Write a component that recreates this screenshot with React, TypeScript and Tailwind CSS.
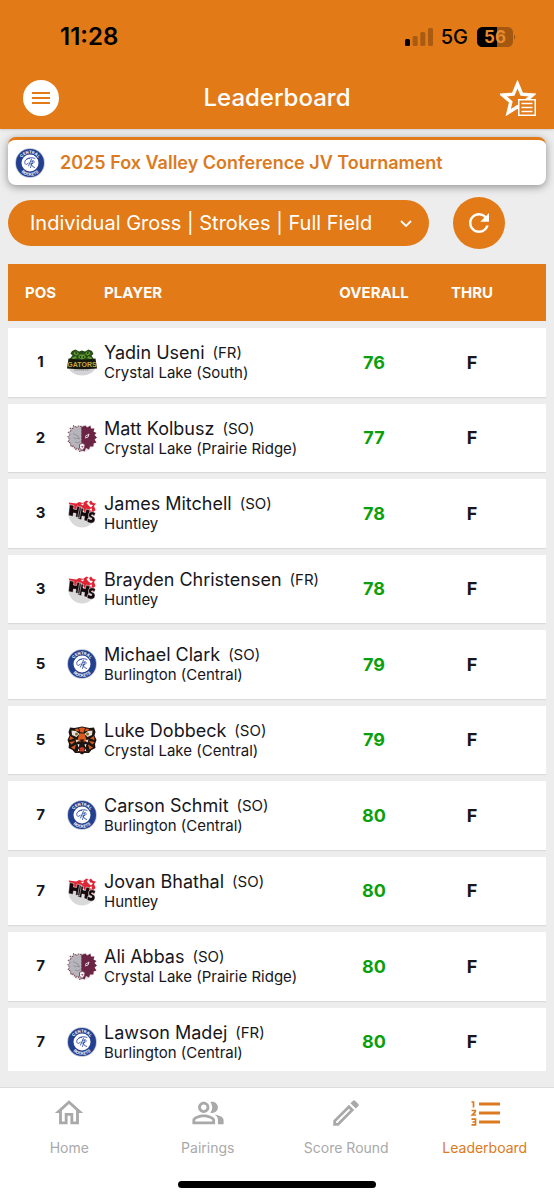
import React, { useId, useState } from 'react';
import { MdOutlineModeEdit, MdOutlinePeopleAlt, MdRefresh } from 'react-icons/md';

type Team = 'gators' | 'wolves' | 'huntley' | 'rockets' | 'tigers';

interface Player {
  pos: number;
  name: string;
  year: string;
  school: string;
  team: Team;
  overall: number;
  thru: string;
}

const players: Player[] = [
  { pos: 1, name: 'Yadin Useni', year: 'FR', school: 'Crystal Lake (South)', team: 'gators', overall: 76, thru: 'F' },
  { pos: 2, name: 'Matt Kolbusz', year: 'SO', school: 'Crystal Lake (Prairie Ridge)', team: 'wolves', overall: 77, thru: 'F' },
  { pos: 3, name: 'James Mitchell', year: 'SO', school: 'Huntley', team: 'huntley', overall: 78, thru: 'F' },
  { pos: 3, name: 'Brayden Christensen', year: 'FR', school: 'Huntley', team: 'huntley', overall: 78, thru: 'F' },
  { pos: 5, name: 'Michael Clark', year: 'SO', school: 'Burlington (Central)', team: 'rockets', overall: 79, thru: 'F' },
  { pos: 5, name: 'Luke Dobbeck', year: 'SO', school: 'Crystal Lake (Central)', team: 'tigers', overall: 79, thru: 'F' },
  { pos: 7, name: 'Carson Schmit', year: 'SO', school: 'Burlington (Central)', team: 'rockets', overall: 80, thru: 'F' },
  { pos: 7, name: 'Jovan Bhathal', year: 'SO', school: 'Huntley', team: 'huntley', overall: 80, thru: 'F' },
  { pos: 7, name: 'Ali Abbas', year: 'SO', school: 'Crystal Lake (Prairie Ridge)', team: 'wolves', overall: 80, thru: 'F' },
  { pos: 7, name: 'Lawson Madej', year: 'FR', school: 'Burlington (Central)', team: 'rockets', overall: 80, thru: 'F' }
];

const RocketsLogo: React.FC = () => {
  const id = useId();
  return (
    <svg viewBox="0 0 60 60" className="w-full h-full" aria-hidden="true">
      <circle cx="30" cy="30" r="29.5" fill="#b3bbcb" />
      <circle cx="30" cy="30" r="28" fill="#233f8f" />
      <circle cx="30" cy="30" r="17" fill="#fff" />
      <path id={`${id}top`} d="M11 30a19 19 0 0 1 38 0" fill="none" />
      <path id={`${id}bottom`} d="M4.5 30a25.500 25.500 0 0 0 51 0" fill="none" />
      <g fill="#fff" fontFamily="Inter, sans-serif" fontWeight="700" fontSize="8" textAnchor="middle">
        <text>
          <textPath href={`#${id}top`} startOffset="50%">CENTRAL</textPath>
        </text>
        <text>
          <textPath href={`#${id}bottom`} startOffset="50%">ROCKETS</textPath>
        </text>
      </g>
      <g fill="none" stroke="#2b4da6" strokeWidth="1.800" strokeLinecap="round">
        <path d="M29 21c-7-1-11 6-9 10 1 3 5 2 7-1M22 24c4-5 12-6 18-3M33 22l-6 14" />
        <path d="M32 27c5-4 9 0 4 4l-5 1c3 0 3 7 8 7M35 27l-4 12" />
      </g>
    </svg>
  );
};

const HuntleyLogo: React.FC = () => (
  <svg viewBox="0 0 60 60" className="w-full h-full" aria-hidden="true">
    <circle cx="30" cy="32" r="27" fill="#d9d9d9" />
    <path d="M0 2h60v38L2 28z" fill="#fff" />
    <path d="M3 9l16 2 5-3 8 2 7-5 5 3 4-3 4 5 6 1-4 5 3 8-5 5 2 8-8-6-8 2-5-8-12 1-12-6z" fill="#e02433" />
    <path d="M39 10l5-3 2 6 6 1-4 5-5-4zM27 12l7-1-2 4zM45 22l5-1-1 6z" fill="#fff" />
    <path
      d="M5 13l9 2-1 7 6 1 1-7 9 2-4 22-8-2 1-7-5-1-1 7-9-2zM25 19l8 2-1 7 5 1 1-7 8 2-4 23-8-2 1-8-5-1-1 8-8-3z"
      fill="#16090c"
      stroke="#fff"
      strokeWidth="1"
    />
    <path d="M57 30c-7-5-14-2-14 4 0 7 8 5 7 8-1 2-5 1-8-2l-2 8c7 4 16 3 16-5 0-7-8-6-7-9 1-1 4 0 6 2z" fill="#16090c" stroke="#fff" strokeWidth="1" />
  </svg>
);

const GatorsLogo: React.FC = () => (
  <svg viewBox="0 0 60 60" className="w-full h-full" aria-hidden="true">
    <path d="M3 38a27 19 0 0 0 54 0z" fill="#d4d4d8" />
    <path d="M10 8l7-3 7 4 6-2 6 2 7-4 7 3 3 6-4 3 5 8-4 8H8L5 24l6-7-4-4z" fill="#274b16" />
    <path d="M14 10l6-1 4 5-5 3-6-3zM46 10l-6-1-4 5 5 3 6-3zM25 15h10l3 6-8 4-8-4zM9 22l8-4 3 4-8 3zM51 22l-8-4-3 4 8 3z" fill="#5f9a2c" />
    <path d="M17 11l3 2M43 11l-3 2M26 19l2 2M34 19l-2 2" stroke="#10200a" strokeWidth="2.500" />
    <path d="M3 23c18 3 36 3 54 0l3 20c-20 2-40 2-60 0z" fill="#17180d" />
    <text x="30" y="40" textAnchor="middle" fontFamily="'Liberation Sans', sans-serif" fontWeight="700" fontSize="14" fill="#c4a940">
      GATORS
    </text>
    <path d="M15 46h30" stroke="#8d8d91" strokeWidth="2" strokeDasharray="3 1" />
  </svg>
);

const WolvesLogo: React.FC = () => (
  <svg viewBox="0 0 60 60" className="w-full h-full" aria-hidden="true">
    <circle cx="30" cy="31" r="27" fill="#e4e4e6" />
    <path
      d="M30 8l-7-2-3 3-7-4-1 6-6-1 2 6-6 3 4 4-5 5 4 4-3 6 5 2 1 7 6-1 3 7 5-3 3 7 5-2z"
      fill="#b5b5bb"
      stroke="#6c3147"
      strokeWidth="1.800"
      strokeDasharray="4 2"
    />
    <path
      d="M29 8l8-3 3 4 7-4 1 6 7 0-2 6 6 3-4 4 5 5-5 4 4 6-6 2v6l-7 0-2 6-6-3-3 7-6-3z"
      fill="#6c2444"
    />
    <path d="M12 21l10 5 3 6-8-2M16 38l7 2 4-4M13 29l4 3" fill="none" stroke="#85838c" strokeWidth="1.500" />
    <path d="M36 27l8-5-2 6-6 2" fill="none" stroke="#e8dbe1" strokeWidth="2" />
    <path d="M25 43l5-3 6 3-1 7-5 5-5-5z" fill="#f2eef0" stroke="#6c3147" strokeWidth="1.600" />
    <path d="M28 46h5l-2 4z" fill="#a45a79" />
  </svg>
);

const TigersLogo: React.FC = () => (
  <svg viewBox="0 0 60 60" className="w-full h-full" aria-hidden="true">
    <path d="M6 5l9 1 15-3 15 3 9-1 3 9-2 7 4 9-3 8 1 8-8 4-5 6-9 0-5 3-5-3-9 0-5-6-8-4 1-8-3-8 4-9-2-7z" fill="#1d1512" />
    <path d="M24 6l6-1 6 1-3 9h-6zM16 8l6-1 3 6-8-2zM44 8l-6-1-3 6 8-2zM25 17h10l5 16H20zM6 22l8 5-9 3zM54 22l-8 5 9 3zM5 34l12-2-8 7zM55 34l-12-2 8 7zM8 45l10-6-3 10zM52 45l-10-6 3 10zM18 52l5-3 2 6zM42 52l-5-3-2 6z" fill="#dd5a1e" />
    <path d="M9 11l9 1 7 6-6 6-9-4zM51 11l-9 1-7 6 6 6 9-4z" fill="#ece0d8" />
    <circle cx="19" cy="18" r="3" fill="#77752f" />
    <circle cx="41" cy="18" r="3" fill="#77752f" />
    <path d="M17 29l7 2-5 4zM43 29l-7 2 5 4z" fill="#ece0d8" />
    <path d="M25 29h10l-5 6z" fill="#1d1512" />
    <path d="M20 36l10 2 10-2 2 16-12 4-12-4z" fill="#1d1512" />
    <path d="M25 46l5-2 5 2-1 7h-8z" fill="#c83a28" />
    <path d="M21 38l2 7 2-6zM39 38l-2 7-2-6zM22 52l1-5 2 5zM38 52l-1-5-2 5z" fill="#fff" />
  </svg>
);

const teamLogos: Record<Team, React.FC> = {
  gators: GatorsLogo,
  wolves: WolvesLogo,
  huntley: HuntleyLogo,
  rockets: RocketsLogo,
  tigers: TigersLogo
};

const HomeIcon: React.FC<{ className?: string }> = ({ className }) => (
  <svg viewBox="0 0 24 24" fill="currentColor" className={className} aria-hidden="true">
    <path d="M12 5.690l5 4.500V18h-2v-6H9v6H7v-7.810l5-4.500M12 3L2 12h3v8h6v-6h2v6h6v-8h3L12 3z" />
  </svg>
);

const RankingIcon: React.FC<{ className?: string }> = ({ className }) => (
  <svg viewBox="0 0 34 34" fill="none" stroke="currentColor" className={className} aria-hidden="true">
    <path d="M11 8h21M11 17h21M11 26h21" strokeWidth="2.800" />
    <path d="M3.500 6h2v5.500M3.500 14.500h3.800v1.200L4.300 19h3.800M3.500 23.200h4v5.600h-4M4.500 26h3" strokeWidth="1.700" />
  </svg>
);

const StarListIcon: React.FC = () => (
  <svg viewBox="0 0 36 36" className="w-9 h-9" aria-hidden="true">
    <path d="M17.500 4l4.200 10.200 10.800.8-8.200 7 2.600 10.600-9.400-5.800-9.300 5.800L10.800 22 2.600 15l10.700-.8z" fill="none" stroke="#fff" strokeWidth="3.400" />
    <rect x="18" y="19" width="18" height="17" fill="#fff" />
    <rect x="19.500" y="20.500" width="15" height="14" fill="#e17a17" />
    <path d="M21.500 23.500h11M21.500 27.500h11M21.500 31.500h11" stroke="#fff" strokeWidth="1.500" />
  </svg>
);

const StatusBar: React.FC = () => (
  <div className="flex items-center justify-between h-[74px] pl-[60px] pr-[38px] text-black">
    <span className="text-[24px] leading-7 font-semibold">11:28</span>
    <div className="flex items-center gap-2">
      <svg viewBox="0 0 28 18" className="w-7 h-[18px]" aria-hidden="true">
        <rect x="0" y="11" width="5" height="7" rx="1.500" />
        <g fillOpacity=".25">
          <rect x="7.700" y="8" width="5" height="10" rx="1.500" />
          <rect x="15.300" y="4" width="5" height="14" rx="1.500" />
          <rect x="23" y="0" width="5" height="18" rx="1.500" />
        </g>
      </svg>
      <span className="text-[20px] leading-6 font-medium">5G</span>
      <svg viewBox="0 0 40 20" className="w-10 h-5" aria-label="Battery 56%">
        <rect x="1" y="0" width="36" height="20" rx="5.500" fill="#a3570f" />
        <path d="M6.500 0H21v20H6.500A5.500 5.500 0 0 1 1 14.500v-9A5.500 5.500 0 0 1 6.500 0z" />
        <path d="M38 7.500c1.600.7 1.600 4.300 0 5z" fill="#a3570f" />
        <text x="19" y="16" textAnchor="middle" fontFamily="Inter, sans-serif" fontWeight="700" fontSize="17" fill="#e98a2f">
          56
        </text>
      </svg>
    </div>
  </div>
);

const tabs = [
  { label: 'Home', Icon: HomeIcon },
  { label: 'Pairings', Icon: MdOutlinePeopleAlt },
  { label: 'Score Round', Icon: MdOutlineModeEdit },
  { label: 'Leaderboard', Icon: RankingIcon }
];

const rowGrid = 'grid grid-cols-[59px_1fr_104px_92px] items-center pr-7';

const App: React.FC = () => {
  const [activeTab, setActiveTab] = useState<string>('Leaderboard');

  return (
    <div className="h-screen flex flex-col bg-[#ededed] text-[#16161c] font-['Inter',sans-serif]">
      <header className="shrink-0 bg-[#e17a17] shadow">
        <StatusBar />
        <div className="grid grid-cols-[36px_1fr_41px] items-center pl-[23px] pr-[18px] pt-1.5 pb-[13px]">
          <button className="w-9 h-9 rounded-full bg-white flex items-center justify-center" aria-label="Menu">
            <svg viewBox="0 0 18 14" className="w-[18px] h-3.5" aria-hidden="true">
              <path d="M0 2h18M0 7h18M0 12h18" stroke="#e17a17" strokeWidth="1.800" />
            </svg>
          </button>
          <h1 className="text-center text-[24px] leading-7 font-medium text-white">Leaderboard</h1>
          <button className="justify-self-end" aria-label="Favorites">
            <StarListIcon />
          </button>
        </div>
      </header>

      <main className="flex-1 min-h-0 flex flex-col px-2 pt-2 pb-4">
        <section className="shrink-0 flex items-center gap-[15px] h-12 pl-[7px] rounded-lg border-t-3 border-[#e17a17] bg-white shadow-[0_2px_8px_rgba(0,0,0,0.4)]">
          <div className="w-[30px] h-[30px]">
            <RocketsLogo />
          </div>
          <h2 className="text-[18px] leading-6 font-semibold text-[#db7a20]">2025 Fox Valley Conference JV Tournament</h2>
        </section>

        <div className="shrink-0 flex items-center gap-6 mt-3 mb-[15px]">
          <div className="relative w-[421px]">
            <select
              aria-label="Leaderboard view"
              className="appearance-none w-full h-[46px] pl-[22px] pr-12 rounded-full bg-[#e17a17] text-white text-[20px]"
            >
              <option>Individual Gross | Strokes | Full Field</option>
            </select>
            <svg viewBox="0 0 12 8" className="absolute right-[17px] top-5 w-3 h-2 pointer-events-none" aria-hidden="true">
              <path d="M1 1l5 5 5-5" fill="none" stroke="#fff" strokeWidth="1.800" />
            </svg>
          </div>
          <button className="w-[52px] h-[52px] rounded-full bg-[#e17a17] flex items-center justify-center" aria-label="Refresh">
            <MdRefresh className="w-[30px] h-[30px] text-white" />
          </button>
        </div>

        <div className="flex-1 min-h-0 overflow-y-auto [scrollbar-width:none]">
          {/* last row runs a little under the fold so the list reads as scrollable */}
          <table className="flex flex-col gap-[7px] h-[calc(100%+5px)]">
            <thead className="block shrink-0 bg-[#e17a17] text-white text-[15px] leading-5">
              <tr className={`${rowGrid} h-[57px]`}>
                <th className="pl-1.5 font-bold">POS</th>
                <th className="pl-[37px] font-bold text-left">PLAYER</th>
                <th className="font-bold">OVERALL</th>
                <th className="font-bold">THRU</th>
              </tr>
            </thead>
            <tbody className="flex-1 flex flex-col gap-[7px]">
              {players.map((player) => {
                const Logo = teamLogos[player.team];
                return (
                  <tr key={player.name} className={`${rowGrid} flex-1 bg-white shadow-[0_1px_1px_rgba(0,0,0,0.08)]`}>
                    <td className="pl-1.5 text-center text-[15px] font-bold">{player.pos}</td>
                    <td className="flex items-center gap-[7px]">
                      <div className="w-[30px] h-[30px] shrink-0">
                        <Logo />
                      </div>
                      <div className="pt-0.5">
                        <div className="flex gap-2 whitespace-nowrap leading-5">
                          <span className="text-[18px]">{player.name}</span>
                          <span className="text-[15px]">({player.year})</span>
                        </div>
                        <div className="text-[15px] leading-5">{player.school}</div>
                      </div>
                    </td>
                    <td className="text-center text-[18px] font-bold text-[#0c9f0c]">{player.overall}</td>
                    <td className="text-center text-[18px] font-bold">{player.thru}</td>
                  </tr>
                );
              })}
            </tbody>
          </table>
        </div>
      </main>

      <nav className="shrink-0 bg-white border-t border-[#dcdcdc]">
        <div className="grid grid-cols-4 pt-2">
          {tabs.map(({ label, Icon }) => (
            <button
              key={label}
              onClick={() => setActiveTab(label)}
              className={`flex flex-col items-center gap-2 ${activeTab === label ? 'text-[#db7a20]' : 'text-[#a9a9a9]'}`}
            >
              <Icon className="w-[34px] h-[34px]" />
              <span className="text-[14px] leading-5">{label}</span>
            </button>
          ))}
        </div>
        <div className="w-[198px] h-[7px] mx-auto mt-[23px] mb-3 rounded-full bg-black" />
      </nav>
    </div>
  );
};

export default App;
